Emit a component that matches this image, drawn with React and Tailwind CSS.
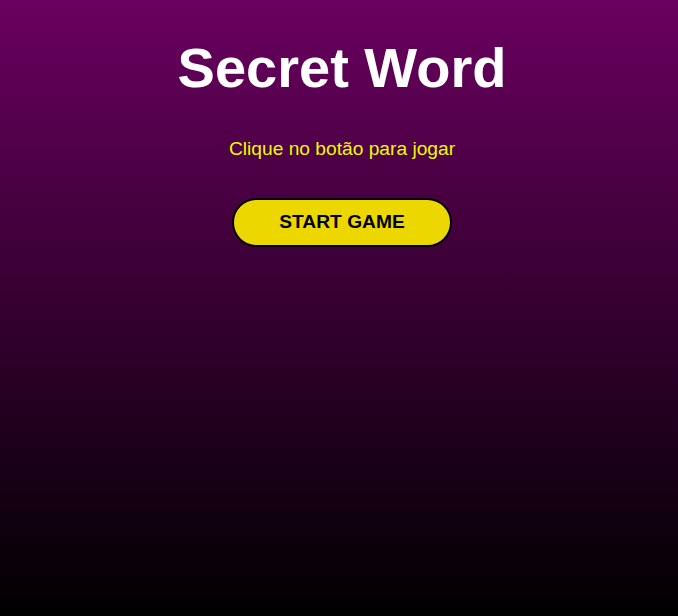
import React from "react";

const App = () => {
  return (
    <div className="min-h-screen w-full pl-[6px] bg-[linear-gradient(180deg,#6a0060_0%,#000000_100%)] flex flex-col items-center text-center font-['Liberation_Sans',Arial,sans-serif]">
      <h1 className="mt-[37px] text-[56px] leading-[1.117] font-bold text-white">
        Secret Word
      </h1>
      <p className="mt-[38px] text-[19.2px] leading-[1.117] text-[#ecfa00]">
        Clique no botão para jogar
      </p>
      <button
        type="button"
        className="mt-[39px] h-[49px] px-[45px] bg-[#ecd800] text-black border-2 border-black rounded-[25px] text-[19.2px] font-bold uppercase cursor-pointer"
      >
        Start Game
      </button>
    </div>
  );
};

export default App;
